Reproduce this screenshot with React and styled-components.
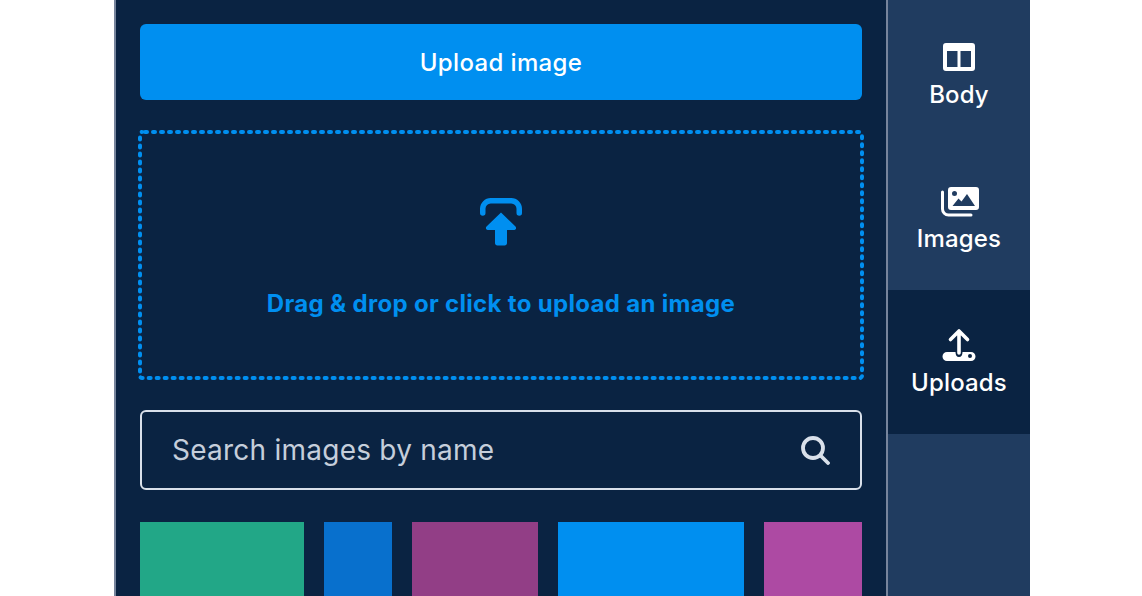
import React from "react";
import styled, { createGlobalStyle } from "styled-components";

const Global = createGlobalStyle`
  html, body { margin: 0; padding: 0; background: #fff; height: 596px; overflow: hidden; }
  body { font-family: "Inter", "Noto Sans", sans-serif; }
`;
const Shell = styled.div`
  display: flex; width: 916px; height: 596px; margin-left: 114px; overflow: hidden;
`;
const Panel = styled.main`
  flex: 0 0 774px; box-sizing: border-box; background: #0a2342;
  border-left: 2px solid #76849c; border-right: 2px solid #76849c;
  padding: 24px 24px 0; display: flex; flex-direction: column; gap: 32px;
`;
const UploadButton = styled.button`
  flex: 0 0 76px; border: 0; border-radius: 6px; background: #008ff0; color: #fff;
  font: 500 24px "Inter", sans-serif; letter-spacing: .36px; padding: 0;
`;
const DropZone = styled.div`
  flex: 0 0 246px; position: relative; display: flex; flex-direction: column; align-items: center;
  color: #008ff0; font-size: 24px; font-weight: 700;
`;
const DashFrame = styled.svg`
  position: absolute; inset: 0; width: 100%; height: 100%; overflow: visible;
`;
const DropIcon = styled.svg`
  width: 44px; height: 50px; margin-top: 64px;
`;
const DropText = styled.div`
  margin-top: 43px; line-height: 30px; letter-spacing: .32px;
`;
const Search = styled.div`
  flex: 0 0 80px; box-sizing: border-box; border: 2px solid #d9e0ea; border-radius: 6px;
  display: flex; align-items: center; justify-content: space-between; padding: 0 30px;
`;
const Placeholder = styled.span`
  color: #c5cedb; font-size: 28px; letter-spacing: .24px; line-height: 34px;
`;
const Tiles = styled.div`
  display: flex; gap: 20px; flex: 1; overflow: hidden;
`;
const Tile = styled.div`
  flex: 0 0 ${p => p.$w}px; background: ${p => p.$c};
`;
const Side = styled.nav`
  flex: 1; background: #203c60; padding-top: 2px;
`;
const Tab = styled.div`
  height: 144px; box-sizing: border-box; padding-top: 40px; display: flex; flex-direction: column;
  align-items: center; color: #fff; font-size: 24px; font-weight: 500; letter-spacing: .15px;
  background: ${p => (p.$active ? "#0a2342" : "transparent")};
`;
const TabIcon = styled.svg`
  width: 40px; height: 32px; display: block; overflow: visible;
`;
const TabLabel = styled.span`
  margin-top: 6px; line-height: 30px;
`;

export default function App() {
  return (
    <>
      <Global />
      <Shell>
        <Panel>
          <UploadButton>Upload image</UploadButton>
          <DropZone>
            <DashFrame viewBox="0 0 722 246" preserveAspectRatio="none">
              <rect x="0" y="0" width="722" height="246" rx="2" fill="none" stroke="#008ff0" strokeWidth="4" strokeLinecap="round" strokeDasharray="2 6" strokeDashoffset="-3" />
            </DashFrame>
            <DropIcon viewBox="0 0 44 50" fill="#008ff0">
              <path d="M3.750 17V12.750a8 8 0 0 1 8-8h20.500a8 8 0 0 1 8 8V17" fill="none" stroke="#008ff0" strokeWidth="5.500" strokeLinecap="round" />
              <path d="M22 16.500l14.500 14c1.200 1.300.5 3.500-1.200 3.500H28v13c0 1.600-1 2.500-2.400 2.500h-7.200C17 49.500 16 48.600 16 47V34H8.700c-1.700 0-2.400-2.200-1.200-3.500z" />
            </DropIcon>
            <DropText>Drag &amp; drop or click to upload an image</DropText>
          </DropZone>
          <Search>
            <Placeholder>Search images by name</Placeholder>
            <svg width="30" height="30" viewBox="0 0 30 30" fill="none" stroke="#d9e0ea" strokeWidth="3.800" strokeLinecap="round">
              <circle cx="13" cy="13" r="10" />
              <path d="M21 21l7 7" />
            </svg>
          </Search>
          <Tiles>
            <Tile $w={164} $c="#22a787" />
            <Tile $w={68} $c="#0870cd" />
            <Tile $w={126} $c="#923e86" />
            <Tile $w={186} $c="#008ff0" />
            <Tile $w={98} $c="#ad4aa3" />
          </Tiles>
        </Panel>
        <Side>
          <Tab>
            <TabIcon viewBox="0 0 40 32">
              <path fillRule="evenodd" fill="#fff" d="M7 1h26a3 3 0 0 1 3 3v22a3 3 0 0 1-3 3H7a3 3 0 0 1-3-3V4a3 3 0 0 1 3-3zm1 8v16h10.500V9zm13.500 0v16H32V9z" />
            </TabIcon>
            <TabLabel>Body</TabLabel>
          </Tab>
          <Tab>
            <TabIcon viewBox="0 0 40 32">
              <path fill="none" stroke="#fff" strokeWidth="3" strokeLinecap="round" d="M3.500 6v17a6 6 0 0 0 6 6H32" />
              <path fillRule="evenodd" fill="#fff" d="M12 1h25a3 3 0 0 1 3 3v17a3 3 0 0 1-3 3H12a3 3 0 0 1-3-3V4a3 3 0 0 1 3-3zm1.500 19h22.500l-8-12-5.500 7.500-3-3zM15.500 5a2.500 2.500 0 1 0 0 5 2.500 2.500 0 0 0 0-5z" />
            </TabIcon>
            <TabLabel>Images</TabLabel>
          </Tab>
          <Tab $active>
            <TabIcon viewBox="0 0 40 32">
              <path fill="none" stroke="#fff" strokeWidth="3.600" strokeLinecap="round" strokeLinejoin="round" d="M20 23V1M11.500 9.500L20 1l8.500 8.500" />
              <path fillRule="evenodd" fill="#fff" d="M8 22h8.500c0 3 1.200 5 3.500 5s3.500-2 3.500-5H32a4.500 4.500 0 0 1 0 9H8a4.500 4.500 0 0 1 0-9zm23 2a2 2 0 1 0 0 4 2 2 0 0 0 0-4z" />
            </TabIcon>
            <TabLabel>Uploads</TabLabel>
          </Tab>
        </Side>
      </Shell>
    </>
  );
}
